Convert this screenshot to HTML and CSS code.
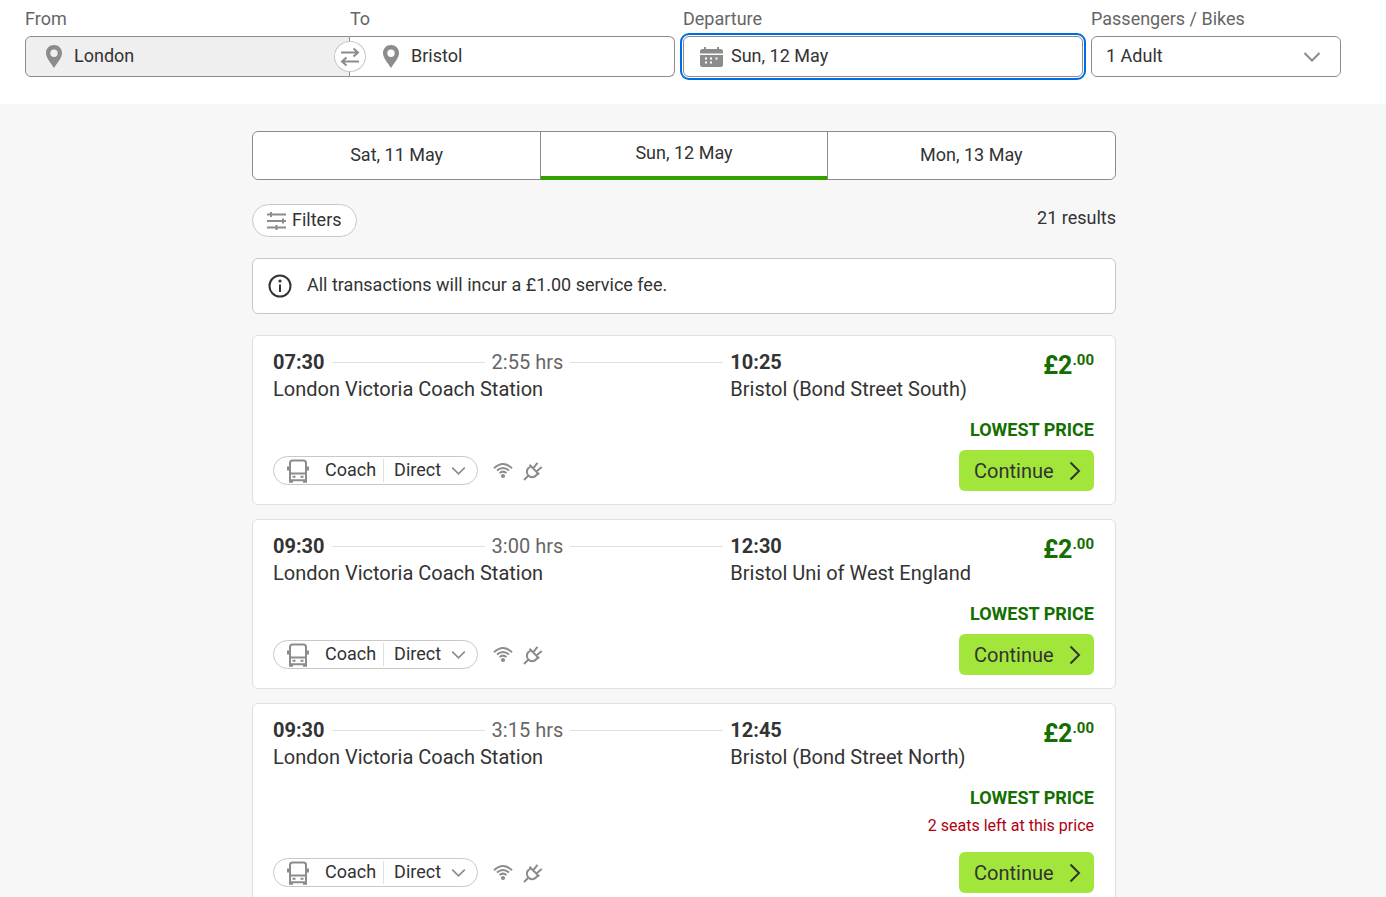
FILE: index.html
```html
<!DOCTYPE html>
<html lang="en">
<head>
    <meta charset="UTF-8">
    <meta name="viewport" content="width=device-width, initial-scale=1">
    <title>London to Bristol - Coach times</title>
    <link rel="stylesheet" href="styles.css">
</head>
<body>
    <!-- shared icons -->
    <svg class="sprite" aria-hidden="true">
        <symbol id="pin" viewBox="0 0 16 23"><path fill-rule="evenodd" d="M8 0C3.500 0 0 3.500 0 8c0 5 5 10 8 15 3-5 8-10 8-15 0-4.500-3.500-8-8-8zm0 4.500a3.700 3.700 0 1 1 0 7.400 3.700 3.700 0 0 1 0-7.400z"/></symbol>
        <symbol id="chevron" viewBox="0 0 18 12"><path d="M1.500 2 9 9.500 16.500 2"/></symbol>
        <symbol id="bus" viewBox="0 0 22 24">
            <path d="M3 21V4q0-2.500 2.500-2.500h11Q19 1.500 19 4v17" stroke-width="2"/>
            <path d="M1 7.500v4M21 7.500v4M3 14.500h16M5.500 17.800h3M13.500 17.800h3" stroke-width="2"/>
            <path stroke="none" fill="currentColor" d="M2 20.200h18v3.600h-4V22.200H6v1.600H2z"/>
        </symbol>
        <symbol id="wifi" viewBox="0 0 20 17">
            <path d="M1 6.200q9-8.400 18 0M4 8.600q6-5.200 12 0M6.500 11q3.500-2.800 7 0"/>
            <circle cx="10" cy="14" r="2.100" fill="currentColor" stroke="none"/>
        </symbol>
        <symbol id="plug" viewBox="0 0 20 20">
            <path d="M1 19l4.500-4.500M6.500 3.800l9.700 9.700M8 5.300C3.600 7.200 2.600 11.600 5.300 14.500c2.800 2.800 7.400 2 9.400-2.500M10.500 6.800l4-5M13.700 10.300l5-4.300"/>
        </symbol>
    </svg>

    <header class="search">
        <div class="route">
            <div class="field">
                <label for="from">From</label>
                <div class="box box-from">
                    <svg class="icon-pin"><use href="#pin"/></svg>
                    <input type="text" id="from" value="London">
                </div>
            </div>
            <div class="field">
                <label for="to">To</label>
                <div class="box box-to">
                    <svg class="icon-pin"><use href="#pin"/></svg>
                    <input type="text" id="to" value="Bristol">
                </div>
            </div>
            <button class="swap" type="button" aria-label="Swap from and to">
                <svg viewBox="0 0 20 20"><path d="M1 5.500h17M13.500 1.500l4.500 4-4.500 4M19 14.500H2M6.500 10.500l-4.500 4 4.500 4"/></svg>
            </button>
        </div>
        <div class="field">
            <label for="departure">Departure</label>
            <div class="box box-date">
                <svg class="icon-calendar" viewBox="0 0 23 20">
                    <path fill-rule="evenodd" d="M0 6.500V4.500Q0 2 2.500 2H4V0h2v2h11V0h2v2h1.500Q23 2 23 4.500v2zM0 8h23v9.500q0 2.500-2.500 2.500h-18Q0 20 0 17.500zM5 10.500v2h2v-2zm5 0v2h2v-2zm5.500 0v2h2v-2zM5 14.500v2h2v-2zm5 0v2h2v-2z"/>
                </svg>
                <input type="text" id="departure" value="Sun, 12 May">
            </div>
        </div>
        <div class="field">
            <label for="passengers">Passengers / Bikes</label>
            <div class="box box-passengers">
                <select id="passengers">
                    <option>1 Adult</option>
                </select>
                <svg class="icon-select"><use href="#chevron"/></svg>
            </div>
        </div>
    </header>

    <main class="results">
        <nav class="dates">
            <a href="#">Sat, 11 May</a>
            <a href="#" class="active">Sun, 12 May</a>
            <a href="#">Mon, 13 May</a>
        </nav>

        <div class="toolbar">
            <button class="filters" type="button">
                <svg viewBox="0 0 20 18"><path d="M0 2.500h19M0 9h19M0 15.500h19M4 0v5M16 6.500v5M9.500 13v5"/></svg>
                Filters
            </button>
            <span class="count">21 results</span>
        </div>

        <div class="notice">
            <svg viewBox="0 0 24 24"><circle cx="12" cy="12" r="10.500"/><path d="M12 10.500v7.500"/><circle class="dot" cx="12" cy="7" r="1.600"/></svg>
            <p>All transactions will incur a £1.00 service fee.</p>
        </div>

        <article class="card">
            <div class="journey">
                <div class="leg">
                    <div class="times"><strong>07:30</strong><span class="duration">2:55 hrs</span></div>
                    <p>London Victoria Coach Station</p>
                </div>
                <div class="stop">
                    <strong>10:25</strong>
                    <p>Bristol (Bond Street South)</p>
                </div>
                <div class="price">£2<sup>.00</sup></div>
            </div>
            <p class="lowest">LOWEST PRICE</p>
            <div class="actions">
                <button class="details" type="button">
                    <svg class="icon-bus"><use href="#bus"/></svg>
                    <span class="mode">Coach</span>
                    <span>Direct</span>
                    <svg class="icon-more"><use href="#chevron"/></svg>
                </button>
                <svg class="icon-wifi" role="img" aria-label="Wifi"><use href="#wifi"/></svg>
                <svg class="icon-plug" role="img" aria-label="Power sockets"><use href="#plug"/></svg>
                <button class="continue" type="button">Continue <svg viewBox="0 0 12 20"><path d="M1.500 1.500 10 10l-8.500 8.500"/></svg></button>
            </div>
        </article>

        <article class="card">
            <div class="journey">
                <div class="leg">
                    <div class="times"><strong>09:30</strong><span class="duration">3:00 hrs</span></div>
                    <p>London Victoria Coach Station</p>
                </div>
                <div class="stop">
                    <strong>12:30</strong>
                    <p>Bristol Uni of West England</p>
                </div>
                <div class="price">£2<sup>.00</sup></div>
            </div>
            <p class="lowest">LOWEST PRICE</p>
            <div class="actions">
                <button class="details" type="button">
                    <svg class="icon-bus"><use href="#bus"/></svg>
                    <span class="mode">Coach</span>
                    <span>Direct</span>
                    <svg class="icon-more"><use href="#chevron"/></svg>
                </button>
                <svg class="icon-wifi" role="img" aria-label="Wifi"><use href="#wifi"/></svg>
                <svg class="icon-plug" role="img" aria-label="Power sockets"><use href="#plug"/></svg>
                <button class="continue" type="button">Continue <svg viewBox="0 0 12 20"><path d="M1.500 1.500 10 10l-8.500 8.500"/></svg></button>
            </div>
        </article>

        <article class="card">
            <div class="journey">
                <div class="leg">
                    <div class="times"><strong>09:30</strong><span class="duration">3:15 hrs</span></div>
                    <p>London Victoria Coach Station</p>
                </div>
                <div class="stop">
                    <strong>12:45</strong>
                    <p>Bristol (Bond Street North)</p>
                </div>
                <div class="price">£2<sup>.00</sup></div>
            </div>
            <p class="lowest">LOWEST PRICE</p>
            <p class="seats">2 seats left at this price</p>
            <div class="actions">
                <button class="details" type="button">
                    <svg class="icon-bus"><use href="#bus"/></svg>
                    <span class="mode">Coach</span>
                    <span>Direct</span>
                    <svg class="icon-more"><use href="#chevron"/></svg>
                </button>
                <svg class="icon-wifi" role="img" aria-label="Wifi"><use href="#wifi"/></svg>
                <svg class="icon-plug" role="img" aria-label="Power sockets"><use href="#plug"/></svg>
                <button class="continue" type="button">Continue <svg viewBox="0 0 12 20"><path d="M1.500 1.500 10 10l-8.500 8.500"/></svg></button>
            </div>
        </article>
    </main>
</body>
</html>
```
FILE: styles.css
```css
* { box-sizing: border-box; }
body { margin: 0; background: #f7f7f7; color: #333; font-family: Roboto, Arial, sans-serif; font-size: 18px; line-height: 24px; }
p { margin: 0; }
svg { flex: none; fill: none; stroke: #8c8c8c; color: #8c8c8c; }
button, input, select { font: inherit; color: inherit; }
button { cursor: pointer; }
.sprite { position: absolute; width: 0; height: 0; }

/* search bar */
.search { display: grid; grid-template-columns: 13fr 8fr 5fr; gap: 8px; padding: 6px 45px 27px 25px; background: #fff; }
.route { position: relative; display: grid; grid-template-columns: 1fr 1fr; }
.field label { display: block; height: 30px; line-height: 25px; color: #666; }
.box { position: relative; display: flex; align-items: center; height: 41px; border: 1px solid #8c8c8c; border-radius: 6px; background: #fff; }
.box input, .box select { flex: 1; min-width: 0; height: 37px; padding: 0 0 2px; border: 0; outline: 0; background: transparent; }
.box-from { border-radius: 6px 0 0 6px; background: #efefef; }
.box-to { border-left: 0; border-radius: 0 6px 6px 0; }
.box-from, .box-to { gap: 12px; padding-left: 20px; }
.box-to { padding-left: 33px; }
.box-date { gap: 8px; padding-left: 16px; outline: 2px solid #006be6; outline-offset: 1px; }
.box-passengers select { padding-left: 14px; appearance: none; }
.icon-pin { width: 16px; height: 23px; fill: #8c8c8c; stroke: none; }
.icon-calendar { width: 23px; height: 20px; fill: #8c8c8c; stroke: none; }
.icon-select { position: absolute; right: 19px; width: 18px; height: 12px; stroke-width: 2; pointer-events: none; }
.swap { position: absolute; left: 50%; bottom: 5px; display: flex; align-items: center; justify-content: center; width: 32px; height: 31px; margin-left: -16px; padding: 0; border: 1px solid #c8c8c8; border-radius: 50%; background: #fff; }
.swap svg { width: 20px; height: 20px; stroke-width: 2; }

/* results */
.results { max-width: 918px; margin: 0 auto; padding: 27px 36px 14px 18px; }
.dates { display: grid; grid-template-columns: 1fr 1fr 1fr; height: 49px; border: 1px solid #8c8c8c; border-radius: 6px; background: #fff; }
.dates a { color: #333; line-height: 46px; text-align: center; text-decoration: none; }
.dates .active { margin-bottom: -1px; border: solid #8c8c8c; border-width: 0 1px; line-height: 42px; box-shadow: inset 0 -4px #32a200; }
.toolbar { display: flex; justify-content: space-between; margin: 24px 0 21px; }
.filters { display: flex; align-items: center; gap: 5px; height: 33px; padding: 0 14px 2px; border: 1px solid #c8c8c8; border-radius: 17px; background: #fff; }
.filters svg { width: 20px; height: 18px; margin-top: 2px; stroke-width: 2; }
.count { line-height: 28px; }
.notice { display: flex; align-items: center; gap: 15px; height: 56px; padding: 0 15px; border: 1px solid #c8c8c8; border-radius: 6px; background: #fff; }
.notice svg { width: 24px; height: 24px; stroke: #333; stroke-width: 2; }
.notice .dot { fill: #333; stroke: none; }
.notice p { padding-bottom: 3px; }
.notice + .card { margin-top: 21px; }

.card { margin-top: 14px; padding: 13px 21px 13px 20px; border: 1px solid #e0e0e0; border-radius: 6px; background: #fff; }
.journey { display: grid; grid-template-columns: 19fr 13fr 2fr; font-size: 20px; line-height: 27px; }
.leg { padding-right: 7px; }
.times { display: flex; align-items: center; }
.duration { display: flex; flex: 1; align-items: center; gap: 7px; margin-left: 7px; color: #666; }
.duration::before, .duration::after { content: ""; flex: 1; border-top: 1px solid #e0e0e0; }
.stop { white-space: nowrap; }
.price { color: #146e00; font-size: 25px; font-weight: 700; line-height: 33px; text-align: right; white-space: nowrap; }
.price sup { font-size: 15px; line-height: 0; }
.lowest { margin-top: 15px; color: #146e00; font-weight: 700; text-align: right; }
.seats { margin: 4px 0 14px; color: #b00012; font-size: 16px; text-align: right; }
.actions { display: flex; align-items: center; margin-top: 8px; }
.details { display: flex; align-items: center; height: 29px; padding: 0 11px 0 13px; border: 1px solid #c8c8c8; border-radius: 15px; background: #fff; }
.details span { padding: 0 10px 1px; }
.details .mode { padding: 0 7px 1px 16px; border-right: 1px solid #e0e0e0; line-height: 22px; }
.icon-bus { width: 22px; height: 24px; }
.icon-more { width: 15px; height: 10px; stroke-width: 2; }
.icon-wifi { width: 20px; height: 17px; margin-left: 15px; stroke-width: 2; }
.icon-plug { width: 20px; height: 20px; margin-left: 10px; stroke-width: 2; }
.continue { display: flex; align-items: center; justify-content: space-between; width: 135px; height: 41px; margin-left: auto; padding: 0 13px 0 15px; border: 0; border-radius: 6px; background: #a2e63c; font-size: 20px; }
.continue svg { width: 12px; height: 20px; stroke: #333; stroke-width: 2; }
```
